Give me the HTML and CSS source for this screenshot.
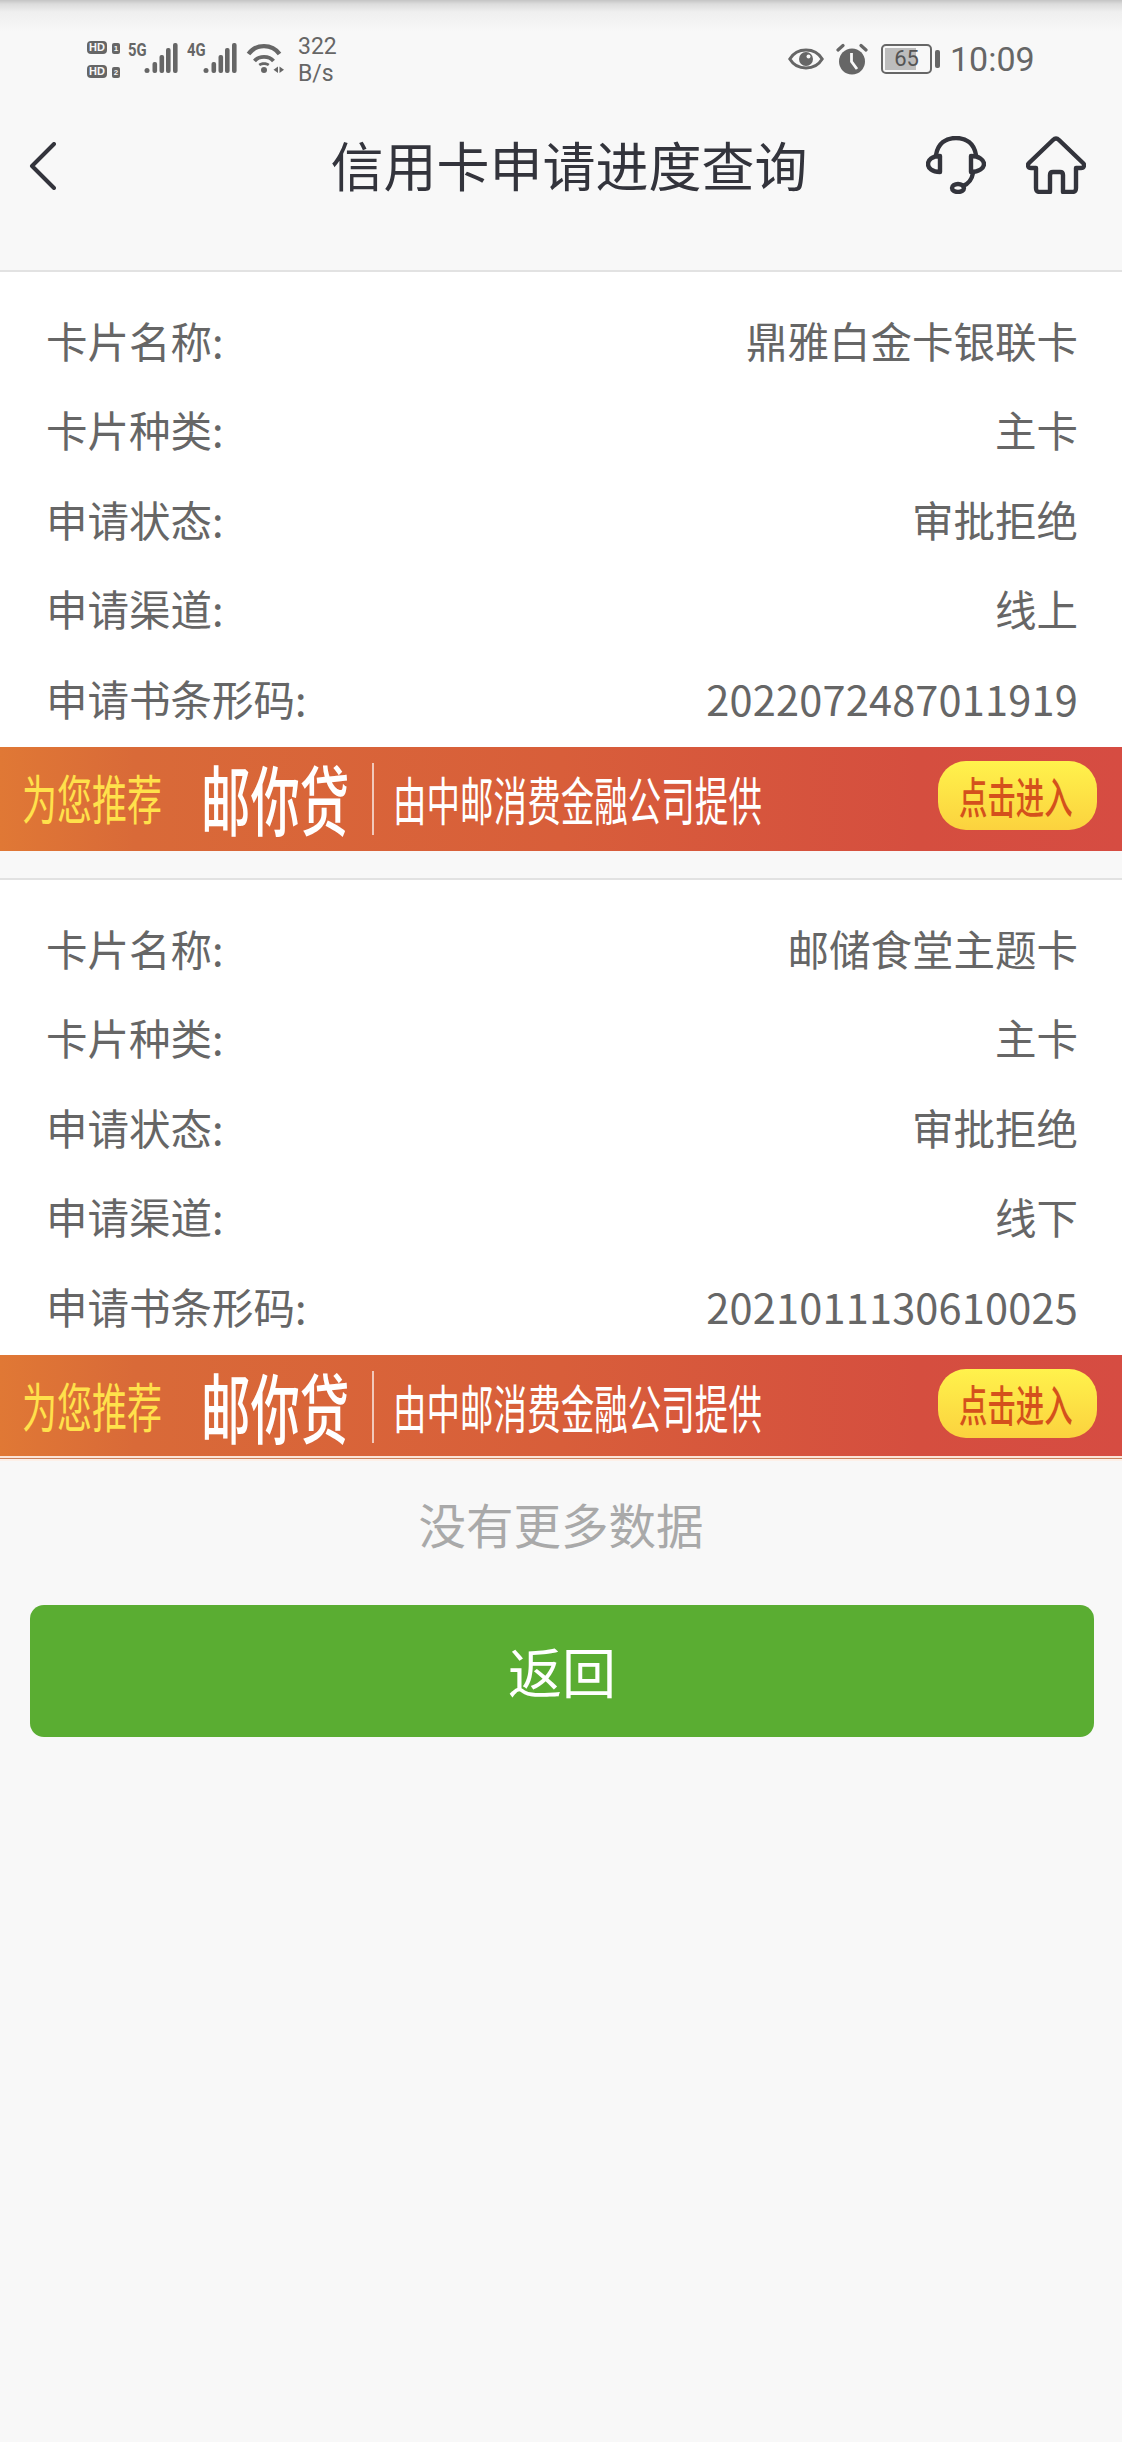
FILE: index.html
```html
<!DOCTYPE html>
<html lang="zh-CN">
<head>
<meta charset="utf-8">
<title>信用卡申请进度查询</title>
<link rel="stylesheet" href="styles.css">
</head>
<body>
<div class="status">
  <div class="status-left">
    <div class="sims">
      <div class="sim"><span class="hd">HD</span><span class="slot">1</span></div>
      <div class="sim"><span class="hd">HD</span><span class="slot">2</span></div>
    </div>
    <div class="net"><span class="gen">5G</span>
      <svg width="34" height="31" viewBox="0 0 34 31"><g fill="#666"><circle cx="3" cy="27.5" r="2.5"/><rect x="8.5" y="19" width="4.6" height="11" rx="2"/><rect x="15.5" y="12" width="4.6" height="18" rx="2"/><rect x="22" y="5" width="4.6" height="25" rx="2"/><rect x="29" y="0" width="4.6" height="30" rx="2"/></g></svg>
    </div>
    <div class="net"><span class="gen">4G</span>
      <svg width="34" height="31" viewBox="0 0 34 31"><g fill="#666"><circle cx="3" cy="27.5" r="2.5"/><rect x="8.5" y="19" width="4.6" height="11" rx="2"/><rect x="15.5" y="12" width="4.6" height="18" rx="2"/><rect x="22" y="5" width="4.6" height="25" rx="2"/><rect x="29" y="0" width="4.6" height="30" rx="2"/></g></svg>
    </div>
    <svg class="wifi" width="38" height="32" viewBox="0 0 38 32"><g fill="none" stroke="#666"><path d="M2.5 11 C10 0.5 26 0.5 33.5 11" stroke-width="4.4"/><path d="M8.5 18 C13 12.5 23 12.5 27.5 18" stroke-width="3.8"/></g><g fill="#666"><path d="M12.5 21 C15 18.5 21 18.5 23.5 21 L22 23 C19.5 21.5 16.5 21.5 14 23 Z"/><circle cx="18" cy="27" r="3"/><path d="M32 23.5 L32 30 L27.5 26.8 Z"/><path d="M33.5 23.5 L33.5 30 L38 26.8 Z"/></g></svg>
    <div class="speed"><span>322</span><span>B/s</span></div>
  </div>
  <div class="status-right">
    <svg width="36" height="30" viewBox="0 0 36 30"><path d="M1.8 15 C9 3 27 3 34.2 15 C27 27 9 27 1.8 15 Z" fill="none" stroke="#666" stroke-width="3"/><circle cx="18" cy="15" r="7" fill="#666"/><circle cx="20.5" cy="12.5" r="2" fill="#f8f8f8"/></svg>
    <svg class="alarm" width="32" height="32" viewBox="0 0 32 32"><circle cx="16" cy="18.5" r="13" fill="#666"/><path d="M15.5 10 V18.5 L21 26" fill="none" stroke="#f8f8f8" stroke-width="2.8"/><path d="M2 7 L7 2.5 M25 2.5 L30 7" stroke="#666" stroke-width="3.2" stroke-linecap="round"/></svg>
    <div class="battery"><div class="cell"><div class="fill"></div><span class="pct">65</span></div><div class="cap"></div></div>
    <span class="time">10:09</span>
  </div>
</div>

<header class="nav">
  <svg class="back" width="27" height="48" viewBox="0 0 27 48"><path d="M25 2 L3 24 L25 46" fill="none" stroke="#33343c" stroke-width="4" stroke-linecap="round" stroke-linejoin="round"/></svg>
  <h1 class="title">信用卡申请进度查询</h1>
  <div class="nav-icons">
    <svg width="60" height="58" viewBox="0 0 60 58"><g fill="none" stroke="#33343c" stroke-width="4.4" stroke-linecap="round" stroke-linejoin="round"><path d="M10 19 C12 7 20 2 30 2 C40 2 48 7 50 19"/><path d="M14 20 V36 C6 36 2 32 2 28 C2 24 6 20 14 20 Z"/><path d="M45 20 V36 C53 36 58 32 58 28 C58 24 53 20 45 20 Z"/><path d="M47 37 C46 43 42 48 37 50"/><ellipse cx="32" cy="52" rx="6" ry="4"/></g></svg>
    <svg width="60" height="58" viewBox="0 0 60 58"><path d="M27 4 C29 2 31 2 33 4 L57 27 C59 29 58 32 55 32 H50 V52 C50 55 49 56 46 56 H37 V39 C37 37 36 36 34 36 H27 C25 36 24 37 24 39 V56 H14 C11 56 10 55 10 52 V32 H5 C2 32 1 29 3 27 Z" fill="none" stroke="#33343c" stroke-width="4.4" stroke-linejoin="round"/></svg>
  </div>
</header>

<section class="card">
  <dl class="rows">
    <div class="row"><dt>卡片名称:</dt><dd>鼎雅白金卡银联卡</dd></div>
    <div class="row"><dt>卡片种类:</dt><dd>主卡</dd></div>
    <div class="row"><dt>申请状态:</dt><dd>审批拒绝</dd></div>
    <div class="row"><dt>申请渠道:</dt><dd>线上</dd></div>
    <div class="row"><dt>申请书条形码:</dt><dd class="num">2022072487011919</dd></div>
  </dl>
  <div class="banner">
    <span class="b-text b-rec">为您推荐</span>
    <span class="b-text b-name">邮你贷</span>
    <i class="b-div"></i>
    <span class="b-text b-sub">由中邮消费金融公司提供</span>
    <span class="b-btn"><span class="b-text b-enter">点击进入</span></span>
  </div>
</section>

<section class="card last">
  <dl class="rows">
    <div class="row"><dt>卡片名称:</dt><dd>邮储食堂主题卡</dd></div>
    <div class="row"><dt>卡片种类:</dt><dd>主卡</dd></div>
    <div class="row"><dt>申请状态:</dt><dd>审批拒绝</dd></div>
    <div class="row"><dt>申请渠道:</dt><dd>线下</dd></div>
    <div class="row"><dt>申请书条形码:</dt><dd class="num">2021011130610025</dd></div>
  </dl>
  <div class="banner">
    <span class="b-text b-rec">为您推荐</span>
    <span class="b-text b-name">邮你贷</span>
    <i class="b-div"></i>
    <span class="b-text b-sub">由中邮消费金融公司提供</span>
    <span class="b-btn"><span class="b-text b-enter">点击进入</span></span>
  </div>
  <div class="edge"></div>
</section>

<p class="nomore">没有更多数据</p>
<button class="return" type="button">返回</button>
</body>
</html>
```
FILE: styles.css
```css
* { box-sizing: border-box; margin: 0; padding: 0; }
body {
  width: 1122px;
  height: 2442px;
  background: #f8f8f8;
  font-family: "Noto Sans CJK SC", "Noto Sans", sans-serif;
  overflow: hidden;
}

/* status bar */
.status {
  height: 100px;
  padding-top: 30px;
  display: flex;
  justify-content: space-between;
  align-items: flex-start;
  background: linear-gradient(#c4c4c4 0, #dcdcdc 4px, #efefef 12px, #f8f8f8 32px);
  color: #666;
}
.status-left { display: flex; align-items: flex-start; padding-left: 87px; }
.sims { display: flex; flex-direction: column; gap: 11px; margin-top: 11px; width: 41px; }
.sim { display: flex; align-items: flex-end; gap: 5px; height: 13px; }
.hd {
  width: 20px; height: 13px; border-radius: 4px; background: #666; color: #f8f8f8;
  font: 700 11px/13px "Liberation Sans", sans-serif; text-align: center;
}
.slot {
  width: 8px; height: 11px; border-radius: 2px; background: #666; color: #f8f8f8;
  font: 700 8px/11px "Liberation Sans", sans-serif; text-align: center;
}
.net { display: flex; align-items: flex-start; margin-top: 13px; margin-right: 9px; }
.net svg { display: block; }
.gen {
  display: block; width: 16px; white-space: nowrap;
  font: 700 19px/14px "Roboto", sans-serif;
  transform: scaleX(.78); transform-origin: left center;
}
.wifi { display: block; margin-top: 13px; }
.speed {
  display: flex; flex-direction: column; margin: 3px 0 0 14px;
  font: 400 23px/27px "Roboto", sans-serif;
}
.status-right { display: flex; align-items: center; width: 334px; margin-top: 12px; }
.alarm { margin-left: 12px; }
.battery { display: flex; align-items: center; margin-left: 13px; }
.cell {
  position: relative; width: 51px; height: 30px; border: 2.6px solid #666; border-radius: 5px;
  display: flex; align-items: center; justify-content: center;
}
.fill { position: absolute; left: 2px; top: 2px; bottom: 2px; width: 31px; background: #bdbdbd; }
.pct { position: relative; font: 400 22px/1 "Roboto", sans-serif; color: #555; }
.cap { width: 5px; height: 18px; margin-left: 3px; background: #666; border-radius: 2px; }
.time { margin-left: 10px; font: 400 34px/1 "Roboto", sans-serif; color: #666; }

/* navigation */
.nav {
  position: relative;
  height: 172px;
  padding-top: 37px;
  border-bottom: 2px solid #e2e2e2;
}
.back { position: absolute; left: 29px; top: 42px; }
.title {
  padding-left: 16px;
  text-align: center;
  font-size: 53px;
  font-weight: 400;
  line-height: 54px;
  color: #33343c;
}
.nav-icons { position: absolute; left: 926px; top: 36px; display: flex; gap: 40px; }

/* cards */
.card { background: #fff; }
.card.last { margin-top: 27px; border-top: 2px solid #e2e2e2; }
.rows { height: 475px; padding-top: 23px; }
.row {
  height: 89.5px;
  padding: 0 44px 0 46px;
  display: flex;
  justify-content: space-between;
  align-items: center;
  font-size: 41.5px;
  color: #666;
}
.row dd { margin: 0; }
.row .num { letter-spacing: .2px; }

/* promotional banner */
.banner {
  height: 104px;
  padding: 0 25px 4px 22px;
  display: flex;
  align-items: center;
  background: linear-gradient(90deg, #e07835 0, #d96a38 12%, #d85e3a 50%, #d54e3f 82%, #d64c42 100%);
}
.last .banner { height: 101px; padding-bottom: 1px; }
.b-text {
  display: block;
  flex: none;
  white-space: nowrap;
  transform-origin: left center;
  line-height: 1;
}
.b-rec { width: 141px; font-size: 53px; color: #ffe14b; transform: scaleX(.66); }
.b-name { width: 148px; margin-left: 38px; font-size: 76px; font-weight: 500; color: #fff; transform: scaleX(.65); }
.b-div { flex: none; width: 2px; height: 72px; margin: 4px 0 0 23px; background: rgba(255,255,255,.65); }
.b-sub { width: 369px; margin: 4px 0 0 19px; font-size: 52px; color: #fff; transform: scaleX(.645); }
.b-btn {
  flex: none;
  display: flex;
  align-items: center;
  justify-content: flex-start;
  width: 159px;
  height: 69px;
  margin-left: auto;
  margin-bottom: 3px;
  padding-left: 21px;
  border-radius: 28px;
  background: linear-gradient(#fff24c, #fbd23e);
}
.b-enter { width: 114px; font-size: 43px; font-weight: 500; color: #d4511c; transform: scaleX(.66); }
.edge {
  height: 5px;
  background: linear-gradient(#fbe4d8 0 2px, #c9805c 2px 3px, #fdf0e8 3px 5px);
}

/* footer */
.nomore { margin-top: 33px; text-align: center; font-size: 47.5px; line-height: 60px; color: #a9a9a9; }
.return {
  display: block; width: 1064px; height: 132px; margin: 51px 0 0 30px; border: 0; border-radius: 14px;
  background: #5aad32; color: #fff; font: 400 54px/1 "Noto Sans CJK SC", sans-serif;
}
```
